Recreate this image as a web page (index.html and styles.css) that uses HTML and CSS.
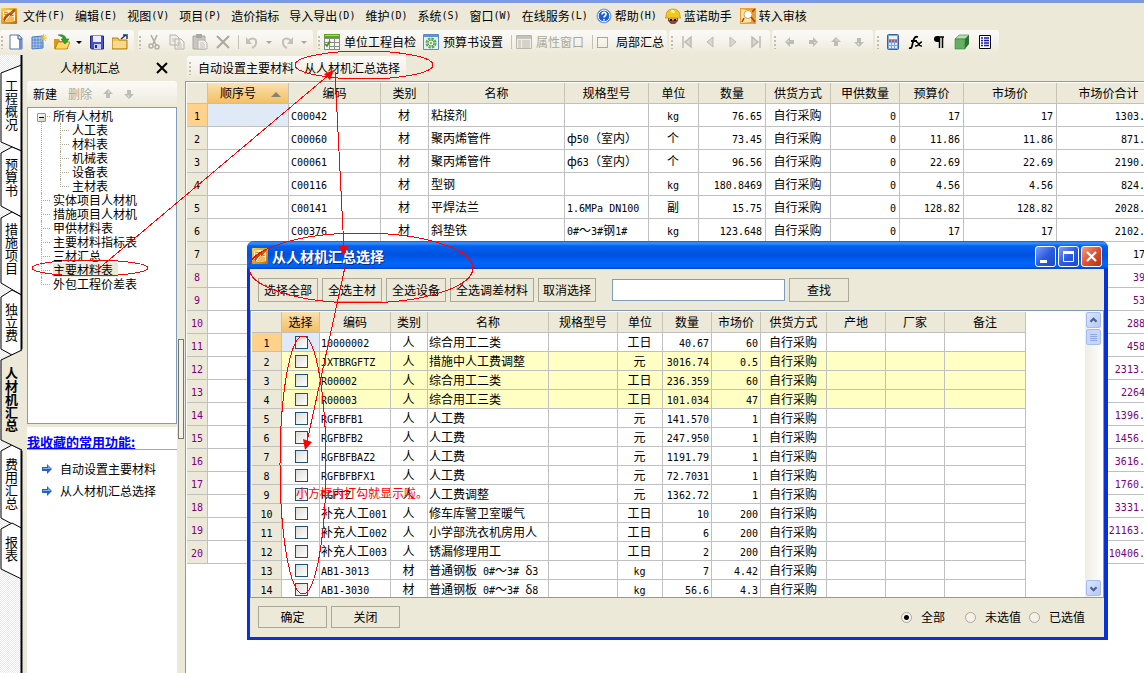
FILE: index.html
```html
<!DOCTYPE html>
<html lang="zh-CN">
<head>
<meta charset="utf-8">
<meta name="viewport" content="width=device-width, initial-scale=1">
<title>人材机汇总</title>
<link rel="stylesheet" href="styles.css">
</head>
<body>
<svg class="defs" aria-hidden="true">
  <defs>
    <linearGradient id="gold" x1="0" y1="0" x2="1" y2="1"><stop offset="0" stop-color="#ffd24a"/><stop offset="1" stop-color="#c56a00"/></linearGradient>
    <symbol id="app" viewBox="0 0 16 16">
      <rect width="16" height="16" rx="1" fill="url(#gold)"/><path d="M2 3l6-1 6 1v10l-6 1-6-1z" fill="#fff3cf"/><path d="M2 12c1-4 3-6 6-7l5-4 2 1-5 6-4 2-2 4z" fill="#b4500c"/><path d="M3 4l4 1M3 6l3 1M9 5l4-1M10 8l3-1" stroke="#c87820" stroke-width="1" fill="none"/><path d="M6 10l3-2 4 1v4l-5 1-3-1z" fill="#f4b850"/><path d="M4 13l5-6" stroke="#fff" stroke-width="1"/>
    </symbol>
    <symbol id="up" viewBox="0 0 10 10"><path d="M5 0l5 5H7v4H3V5H0z" fill="#bdbdb7"/><path d="M5 1l2 3H5z" fill="#dcdcd8"/></symbol>
    <symbol id="go" viewBox="0 0 10 10"><path d="M0 3h5V0l5 5-5 5V7H0z" fill="#2b5fc0"/><path d="M1 4h5V2l3 3H1z" fill="#78b0f5"/></symbol>
  </defs>
</svg>

<div class="app">
  <header>
    <nav class="menu" aria-label="主菜单">
      <svg class="i16"><use href="#app"/></svg>
      <button>文件<span class="en">(F)</span></button><button>编辑<span class="en">(E)</span></button><button>视图<span class="en">(V)</span></button><button>项目<span class="en">(P)</span></button><button>造价指标</button><button>导入导出<span class="en">(D)</span></button><button>维护<span class="en">(D)</span></button><button>系统<span class="en">(S)</span></button><button>窗口<span class="en">(W)</span></button><button>在线服务<span class="en">(L)</span></button>
      <button class="pic"><svg class="i16" viewBox="0 0 16 16"><circle cx="8" cy="8" r="7" fill="#1d5fd0" stroke="#7aa4e6"/><circle cx="8" cy="8" r="5.8" fill="none" stroke="#fff"/><path d="M6 6.500c0-3 4.500-2.500 4 0C9.800 8 8 8 8 9.500M8 11v1.500" stroke="#fff" stroke-width="1.700" fill="none"/></svg>帮助<span class="en">(H)</span></button>
      <button class="pic"><svg class="i16" viewBox="0 0 16 16"><path d="M3 9h10v4l-3 3H6l-3-3z" fill="#8c4a2c"/><path d="M4 10h8v2H4z" fill="#e0a070"/><path d="M5 11h2v2H5zM9 11h2v2H9z" fill="#201008"/><path d="M1 9C1 3 4 1 8 1s7 2 7 8l1 1H0z" fill="#f2c81c" stroke="#a88408" stroke-width=".6"/><path d="M6 2c2-1 4 0 4 3H6z" fill="#fff080"/></svg>蓝诺助手</button>
      <button class="pic"><svg class="i16" viewBox="0 0 16 16"><rect width="16" height="16" fill="#f39a2c"/><path d="M1 1l11 2-1 11-10 1z" fill="#ffe7a8"/><circle cx="8" cy="6.500" r="4" fill="#fff" stroke="#d09a50"/><path d="M11 9l4 5M12 4l3-3M4 10l-2 4" stroke="#9a4b10" stroke-width="1.600"/></svg>转入审核</button>
    </nav>

    <div class="bar">
      <div class="group"><i class="grip"></i>
        <button class="ib" aria-label="新建"><svg class="i16" viewBox="0 0 16 16"><path d="M2 1h9l3 3v11H2z" fill="#fff" stroke="#5a78a8"/><path d="M11 1l3 3v11h-3z" fill="#6e90c8"/><path d="M10 1v4h4" fill="#e8f0ff" stroke="#3a5888"/></svg></button>
        <button class="ib" aria-label="新建表"><svg class="i16" viewBox="0 0 16 16"><path d="M1 3l11-1v12l-11 1z" fill="#a8c8f4" stroke="#4a78c0"/><path d="M4 3v11M7 3v11M10 3v11M1 6h11M1 9h11M1 12h11" stroke="#4a78c0" stroke-width=".7"/><path d="M12.500 0v8M8.500 4h8M10 1l5 6M15 1l-5 6" stroke="#f4c01a"/></svg></button>
        <button class="ib" aria-label="打开"><svg class="i16" viewBox="0 0 16 16"><path d="M0 5h5l1 2h8v8H0z" fill="#d89818"/><path d="M1 15l3-7h12l-3 7z" fill="#ffd968" stroke="#a87008" stroke-width=".7"/><path d="M4 1c5-1 8 1 8 4h3l-4 5-4-5h2c0-2-2-3-5-4z" fill="#2ea32a" stroke="#176e16" stroke-width=".5"/></svg></button>
        <button class="caret" aria-label="打开选项"></button>
        <button class="ib" aria-label="保存"><svg class="i16" viewBox="0 0 16 16"><path d="M1.500 2h13v13h-12l-1-1z" fill="#4a50c8" stroke="#202878"/><path d="M4 2h8v6H4z" fill="#eef"/><path d="M5 10h7v5H5z" fill="#c8d0ec"/><path d="M6 11h2v3H6z" fill="#202878"/></svg></button>
        <button class="ib" aria-label="另存"><svg class="i16" viewBox="0 0 16 16"><path d="M0 4h6l1 2h8v9H0z" fill="#f0c45c" stroke="#9a6a10" stroke-width=".8"/><path d="M1 7h13v7H1z" fill="#f8d98c"/><path d="M9 5l5-4M11 1h4v4" stroke="#203860" stroke-width="1.500" fill="none"/></svg></button>
      </div>
      <div class="group"><i class="grip"></i>
        <button class="ib" aria-label="剪切" disabled><svg class="i16" viewBox="0 0 16 16"><path d="M5 1l5 10M11 1L7 10" stroke="#b0aea6" stroke-width="1.600"/><circle cx="5" cy="12" r="2" fill="none" stroke="#b0aea6" stroke-width="1.500"/><circle cx="11" cy="13" r="2" fill="none" stroke="#b0aea6" stroke-width="1.500"/></svg></button>
        <button class="ib" aria-label="复制" disabled><svg class="i16" viewBox="0 0 16 16"><path d="M1 1h6l3 3v7H1zM6 5h6l3 3v7H6z" fill="#f0efe9" stroke="#b4b2aa"/><path d="M3 5h4M3 7h3M8 9h4M8 11h5M8 13h5" stroke="#c4c2ba"/></svg></button>
        <button class="ib" aria-label="粘贴" disabled><svg class="i16" viewBox="0 0 16 16"><path d="M1 2h12v13H1z" fill="#c8c6be" stroke="#aaa89f"/><path d="M4 0h6v4H4z" fill="#aaa89f"/><path d="M6 6h6l3 3v6H6z" fill="#f0efe9" stroke="#b4b2aa"/><path d="M8 9h4M8 11h5M8 13h5" stroke="#c4c2ba"/></svg></button>
        <button class="ib" aria-label="删除" disabled><svg class="i16" viewBox="0 0 16 16"><path d="M2 2l12 12M14 2L2 14" stroke="#aaa89f" stroke-width="2"/></svg></button>
        <i class="sep"></i>
        <button class="ib" aria-label="撤销" disabled><svg class="i16" viewBox="0 0 16 16"><path d="M4 7c3-4 9-3 8 2 0 2-2 4-4 5" fill="none" stroke="#c2c0b8" stroke-width="2"/><path d="M2 3v7h6z" fill="#c2c0b8"/></svg></button>
        <button class="caret off" aria-label="撤销选项" disabled></button>
        <button class="ib" aria-label="重做" disabled><svg class="i16" viewBox="0 0 16 16"><path d="M12 7c-3-4-9-3-8 2 0 2 2 4 4 5" fill="none" stroke="#c2c0b8" stroke-width="2"/><path d="M14 3v7H8z" fill="#c2c0b8"/></svg></button>
        <button class="caret off" aria-label="重做选项" disabled></button>
      </div>
      <div class="group"><i class="grip"></i>
        <button class="tb"><svg class="i16" viewBox="0 0 16 16"><path d="M0 0h16v16H0z" fill="#8a8a86"/><path d="M0 0h16v4H0z" fill="#5ca81c"/><path d="M1 1h14v1H1z" fill="#a8dc60"/><path d="M1 5h4v3H1zM6 5h4v3H6zM11 5h4v3h-4zM6 9h4v3H6zM11 9h4v3h-4zM6 13h4v2H6zM11 13h4v2h-4zM1 9h4v6H1z" fill="#f4f4f0"/><path d="M1 10l2 2 3-5" stroke="#3c9010" stroke-width="1.600" fill="none"/></svg>单位工程自检</button>
        <button class="tb"><svg class="i16" viewBox="0 0 16 16"><path d="M.5.500h15v15H.5z" fill="#e4f0fc" stroke="#5a8ac8"/><path d="M1 1h14v2H1z" fill="#5a94dc"/><circle cx="8" cy="9" r="4.500" fill="none" stroke="#58a848" stroke-width="2" stroke-dasharray="2.500 1"/><circle cx="8" cy="9" r="3" fill="#eaf8e4" stroke="#58a848"/><circle cx="8" cy="9" r="1" fill="#58a848"/></svg>预算书设置</button>
        <i class="sep"></i>
        <button class="tb" disabled><svg class="i16" viewBox="0 0 16 16"><path d="M.5 1.500h15v13H.5z" fill="#f0efe8" stroke="#b8b6ac"/><path d="M1 2h14v3H1z" fill="#c6c4ba"/><path d="M2 7h3M2 9h3M2 11h3M2 13h3M6 7h8M6 9h8M6 11h8M6 13h8" stroke="#b8b6ac"/></svg>属性窗口</button>
        <i class="sep"></i>
        <label class="part"><input type="checkbox">局部汇总</label>
      </div>
      <div class="group tight"><i class="grip"></i>
        <button class="ib" aria-label="第一条" disabled><svg class="i16" viewBox="0 0 16 16"><path d="M4 2v12M12 3L6 8l6 5z" fill="#d8d7d0" stroke="#bdbbb3" stroke-width="1.500"/></svg></button>
        <button class="ib" aria-label="上一条" disabled><svg class="i16" viewBox="0 0 16 16"><path d="M11 3L5 8l6 5z" fill="#d8d7d0" stroke="#bdbbb3"/></svg></button>
        <button class="ib" aria-label="下一条" disabled><svg class="i16" viewBox="0 0 16 16"><path d="M5 3l6 5-6 5z" fill="#d8d7d0" stroke="#bdbbb3"/></svg></button>
        <button class="ib" aria-label="最后一条" disabled><svg class="i16" viewBox="0 0 16 16"><path d="M12 2v12M4 3l6 5-6 5z" fill="#d8d7d0" stroke="#bdbbb3" stroke-width="1.500"/></svg></button>
      </div>
      <div class="group tight"><i class="grip"></i>
        <button class="ib" aria-label="左移" disabled><svg class="arrow left"><use href="#up"/></svg></button>
        <button class="ib" aria-label="右移" disabled><svg class="arrow right"><use href="#up"/></svg></button>
        <button class="ib" aria-label="上移" disabled><svg class="arrow"><use href="#up"/></svg></button>
        <button class="ib" aria-label="下移" disabled><svg class="arrow down"><use href="#up"/></svg></button>
      </div>
      <div class="group tight"><i class="grip"></i>
        <button class="ib" aria-label="计算器"><svg class="i16" viewBox="0 0 16 16"><rect x="2.500" y=".5" width="11" height="15" rx="1" fill="#7fa6dc" stroke="#3a5ea0"/><path d="M4 2h8v3H4z" fill="#e8f2fc"/><path d="M4 7h2M7 7h2M10 7h2" stroke="#d83820" stroke-width="1.500"/><path d="M4 10h2M7 10h2M10 10h2M4 13h2M7 13h2M10 13h2" stroke="#fff" stroke-width="1.500"/></svg></button>
        <button class="ib" aria-label="函数"><svg class="i16" viewBox="0 0 16 16"><path d="M1 14c3 1 3-2 4-6s2-6 5-5M3 7h6" fill="none" stroke="#000" stroke-width="1.800"/><path d="M8 8c3-1 2 5 6 4M14 8c-3 0-3 5-7 4" fill="none" stroke="#000" stroke-width="1.500"/></svg></button>
        <button class="ib" aria-label="段落标记"><svg class="i16" viewBox="0 0 16 16"><path d="M13 3H7M8.500 3v11M11.500 3v11" stroke="#000" stroke-width="1.500" fill="none"/><path d="M8 2H6a3 3 0 000 6h2z"/></svg></button>
        <button class="ib" aria-label="模型"><svg class="i16" viewBox="0 0 16 16"><path d="M1 5l4-4h10l-4 4z" fill="#b4e0b0" stroke="#3c7c3c" stroke-width=".6"/><path d="M11 5l4-4v9l-4 5z" fill="#2f7034"/><path d="M1 5h10v10H1z" fill="#62b060" stroke="#3c7c3c" stroke-width=".6"/></svg></button>
        <button class="ib" aria-label="列表"><svg class="i16" viewBox="0 0 16 16"><path d="M2.500 1.500h11v13h-11z" fill="#fff" stroke="#000"/><path d="M4 4h2M4 6.500h2M4 9h2M4 11.500h2M7 4h5M7 6.500h5M7 9h5M7 11.500h5" stroke="#1818a8" stroke-width="1.300"/></svg></button>
      </div>
    </div>
  </header>

  <div class="work">
    <nav class="tabs" aria-label="工程页签">
      <svg class="tabshape" width="23" height="618" viewBox="0 0 23 618">
        <g stroke="#000" fill="#fff">
          <path d="M1 18L21.500 10v86L1 87z"/>
          <path d="M1 98l11-6 9.500 4v66L1 151z"/>
          <path d="M1 163l11-6 9.500 5v78L1 228z"/>
          <path d="M1 242l11-7 9.500 5v56L12 300 1 294z"/>
          <path d="M1 396l11-6 9.500 5v79L1 463z"/>
          <path d="M1 474l11-6 9.500 5v51L1 514z"/>
        </g>
        <path d="M21.500 0v295M21.500 395v223" stroke="#000" stroke-width="2"/>
        <path d="M23 294L1 305v80l22 11z" fill="#ece9d8"/><path d="M22 295L1 305v80l21 10" fill="none" stroke="#000"/>
      </svg>
      <button class="t1">工程概况</button><button class="t2">预算书</button><button class="t3">措施项目</button><button class="t4">独立费</button><button class="t5" aria-current="page">人材机汇总</button><button class="t6">费用汇总</button><button class="t7">报表</button>
    </nav>

    <aside class="side">
      <div class="sidehead"><h2>人材机汇总</h2><button aria-label="关闭"><svg width="12" height="12" viewBox="0 0 12 12"><path d="M1 1l10 10M11 1L1 11" stroke="#000" stroke-width="2"/></svg></button></div>
      <div class="sidebar">
        <button>新建</button><button disabled>删除</button><button aria-label="上移" disabled><svg class="arrow"><use href="#up"/></svg></button><button aria-label="下移" disabled><svg class="arrow down"><use href="#up"/></svg></button>
      </div>
      <div class="treebox">
        <button class="fold" aria-label="折叠"></button>
        <ul class="tree">
          <li><span>所有人材机</span>
            <ul><li><span>人工表</span></li><li><span>材料表</span></li><li><span>机械表</span></li><li><span>设备表</span></li><li><span>主材表</span></li></ul>
          </li>
          <li><span>实体项目人材机</span></li><li><span>措施项目人材机</span></li><li><span>甲供材料表</span></li><li><span>主要材料指标表</span></li><li><span>三材汇总</span></li><li><span class="chosen">主要材料表</span></li><li><span>外包工程价差表</span></li>
        </ul>
      </div>
      <section class="fav">
        <h3>我收藏的常用功能:</h3>
        <button><svg class="arrow"><use href="#go"/></svg>自动设置主要材料</button>
        <button><svg class="arrow"><use href="#go"/></svg>从人材机汇总选择</button>
      </section>
    </aside>
    <div class="split"><i></i></div>

    <main>
      <div class="subbar"><div class="group"><i class="grip"></i><button>自动设置主要材料</button><button>从人材机汇总选择</button></div></div>
      <div class="frame">
        <table class="grid big" id="materials">
          <colgroup><col class="w21"><col class="w81"><col class="w92"><col class="w48"><col class="w136"><col class="w84"><col class="w50"><col class="w67"><col class="w65"><col class="w69"><col class="w64"><col class="w93"><col class="w104"></colgroup>
          <thead><tr><th></th><th class="hot sorted">顺序号<i class="sort"></i></th><th>编码</th><th>类别</th><th>名称</th><th>规格型号</th><th>单位</th><th>数量</th><th>供货方式</th><th>甲供数量</th><th>预算价</th><th>市场价</th><th>市场价合计</th></tr></thead>
          <tbody></tbody>
        </table>
      </div>
    </main>
  </div>
</div>

<section class="dialog" role="dialog" aria-labelledby="dlg">
  <div class="title">
    <svg class="i16"><use href="#app"/></svg><h1 id="dlg">从人材机汇总选择</h1>
    <button aria-label="最小化"><svg viewBox="0 0 19 19"><path d="M4 13h7v3H4z" fill="#fff"/></svg></button>
    <button aria-label="最大化"><svg viewBox="0 0 19 19"><path d="M4.500 5v9.500h10V5" fill="none" stroke="#fff"/><path d="M4 4h11v3H4z" fill="#fff"/></svg></button>
    <button class="close" aria-label="关闭"><svg viewBox="0 0 19 19"><path d="M5 5l9 9M14 5l-9 9" stroke="#fff" stroke-width="2.200"/></svg></button>
  </div>
  <div class="tools">
    <button class="cmd">选择全部</button><button class="cmd">全选主材</button><button class="cmd">全选设备</button><button class="cmd long">全选调差材料</button><button class="cmd mid">取消选择</button>
    <input type="text" aria-label="查找内容"><button class="cmd">查找</button>
  </div>
  <div class="pane">
    <div class="scroll">
      <table class="grid small" id="choices">
        <colgroup><col class="w30"><col class="w38"><col class="w71"><col class="w37"><col class="w121"><col class="w69"><col class="w45"><col class="w49"><col class="w49"><col class="w66"><col class="w59"><col class="w59"><col class="w81"></colgroup>
        <thead><tr><th></th><th class="hot">选择</th><th>编码</th><th>类别</th><th>名称</th><th>规格型号</th><th>单位</th><th>数量</th><th>市场价</th><th>供货方式</th><th>产地</th><th>厂家</th><th>备注</th></tr></thead>
        <tbody></tbody>
      </table>
    </div>
    <div class="vbar">
      <button aria-label="向上滚动"><svg viewBox="0 0 15 15"><path d="M4 9l3.500-3.500L11 9" fill="none" stroke="#4d6185" stroke-width="2.500"/></svg></button>
      <div class="thumb"></div>
      <button class="end" aria-label="向下滚动"><svg viewBox="0 0 15 15"><path d="M4 6l3.500 3.500L11 6" fill="none" stroke="#4d6185" stroke-width="2.500"/></svg></button>
    </div>
  </div>
  <div class="foot">
    <button class="cmd ok">确定</button><button class="cmd ok">关闭</button>
    <div class="radios">
      <label><input type="radio" name="show" checked>全部</label><label class="near"><input type="radio" name="show">未选值</label><label><input type="radio" name="show">已选值</label>
    </div>
  </div>
</section>

<svg class="marks" width="1144" height="673" viewBox="0 0 1144 673" aria-hidden="true">
  <g fill="none" stroke="red" shape-rendering="crispEdges">
    <ellipse cx="364" cy="65" rx="69" ry="14"/><ellipse cx="90" cy="268" rx="58" ry="8"/><ellipse cx="361" cy="268" rx="112" ry="35"/><ellipse cx="303" cy="465" rx="23" ry="129"/>
    <path d="M97 270L330 74M335 72L344 250M345 267L307 442"/>
  </g>
  <path d="M334 70l-10 4 6 6zM344 256l-5-10h9zM305 450l-2-11 9 3z" fill="red"/>
</svg>
<p class="remark">小方框内打勾就显示啦。</p>
<script src="tables.js"></script>
</body>
</html>
```

FILE: styles.css
```css
* { box-sizing: border-box; }
body { margin: 0; background: #ece9d8; color: #000; overflow: hidden; font: 12px/14px "Noto Sans CJK SC", sans-serif; }
button { border: 0; padding: 0; margin: 0; background: none; color: inherit; font: inherit; white-space: nowrap; }
button:disabled { color: #aca899; }
h1, h2, h3, p, ul { margin: 0; padding: 0; font-weight: normal; font-size: 12px; }
svg { display: block; flex: none; }
.defs { position: absolute; width: 0; height: 0; }
.i16 { width: 16px; height: 16px; }
.en { font: 10px/12px "DejaVu Sans Mono", monospace; }
.arrow { width: 10px; height: 10px; }
.arrow.left { transform: rotate(-90deg); }
.arrow.right { transform: rotate(90deg); }
.arrow.down { transform: rotate(180deg); }

.app { display: flex; flex-direction: column; height: 100vh; border-top: 3px solid #7b9ae2; }
.menu { display: flex; align-items: center; gap: 10px; height: 26px; padding-left: 1px; margin-bottom: 1px; }
.menu > svg { margin-right: -4px; }
.menu button { display: flex; align-items: center; }
.menu button svg { margin-right: 3px; }
.menu .pic { margin-left: -2px; }

.bar { display: flex; gap: 4px; height: 25px; }
.group { display: flex; align-items: center; height: 24px; padding-right: 3px; border-radius: 3px; background: linear-gradient(#fbfaf7, #f3f1e7 60%, #ece9d8); }
.group.tight { margin-left: -2px; }
.grip { width: 4px; height: 14px; background: linear-gradient(#c1beb0, #c1beb0) 1px 1px / 2px 2px no-repeat, linear-gradient(#c1beb0, #c1beb0) 1px 5px / 2px 2px no-repeat, linear-gradient(#c1beb0, #c1beb0) 1px 9px / 2px 2px no-repeat, linear-gradient(#c1beb0, #c1beb0) 1px 13px / 2px 2px no-repeat; }
.tight .grip { margin: 0 1px; }
.ib { display: flex; justify-content: center; width: 23px; }
.caret { width: 12px; height: 12px; display: flex; align-items: center; justify-content: center; }
.caret::after { content: ""; border: 3px solid transparent; border-top-color: #000; border-bottom: 0; }
.caret.off::after { border-top-color: #aca899; }
.sep { width: 5px; height: 14px; border-right: 1px solid #c5c2b2; margin-right: 1px; }
.tb { display: flex; align-items: center; gap: 4px; padding: 0 4px 0 3px; }
.part { display: flex; align-items: center; gap: 8px; padding-left: 3px; }
.part input { appearance: none; width: 11px; height: 11px; margin: 0; border: 1px solid #aca899; }

.work { display: flex; flex: 1; min-height: 0; }
.tabs { position: relative; flex: none; width: 23px; overflow: hidden; display: flex; flex-direction: column; padding-top: 10px; background: conic-gradient(#fff 25%, #ece9d8 0 50%, #fff 0 75%, #ece9d8 0) 0 0 / 2px 2px; }
.tabshape { position: absolute; left: 0; top: 0; }
.tabs button { position: relative; width: 22px; writing-mode: vertical-rl; text-orientation: upright; font-size: 13px; line-height: 22px; padding-bottom: 2px; text-align: center; }
.t1 { height: 82px; }
.t2 { height: 62px; }
.t3 { height: 82px; }
.t4 { height: 64px; }
.t5 { height: 90px; }
.tabs .t5 { font-weight: bold; }
.t6 { height: 80px; }
.t7 { height: 50px; }

.side { flex: none; width: 154px; padding-left: 4px; display: flex; flex-direction: column; }
.sidehead { display: flex; align-items: center; justify-content: space-between; height: 26px; padding: 0 9px 0 33px; }
.sidebar { display: flex; align-items: center; gap: 11px; height: 26px; padding-left: 6px; border-radius: 3px; background: linear-gradient(#fbfaf7, #f3f1e7 60%, #ece9d8); }
.treebox { position: relative; height: 317px; border: 1px solid #7f9db9; background: #fff; padding: 1px 0 0 13px; }
.fold { position: absolute; left: 9px; top: 5px; width: 9px; height: 9px; z-index: 1; border: 1px solid #7a9ac0; border-radius: 1px; background: linear-gradient(#000, #000) center / 5px 1px no-repeat, linear-gradient(135deg, #fff, #d4cfbf); }
.tree, .tree ul { list-style: none; }
.tree li { position: relative; padding-left: 12px; line-height: 14px; }
.tree li::before { content: ""; position: absolute; left: 0; top: 7px; width: 9px; border-top: 1px dotted #aca899; }
.tree li::after { content: ""; position: absolute; left: 0; top: 0; bottom: 0; border-left: 1px dotted #aca899; }
.tree > li:first-child::after { top: 8px; }
.tree li:last-child::after { bottom: auto; height: 8px; }
.tree ul { padding-left: 7px; }
.tree span { display: inline-block; height: 14px; white-space: nowrap; }
.tree .chosen { background: #ece9d8; padding-right: 5px; }
.fav { flex: 1; margin-top: 3px; background: #fff; }
.fav h3 { height: 23px; padding-top: 8px; border-bottom: 1px solid #aca899; color: #00f; font-weight: bold; font-size: 13px; text-decoration: underline; white-space: nowrap; margin-bottom: 8px; }
.fav button { display: flex; align-items: center; gap: 8px; height: 22px; padding-left: 15px; }
.split { flex: none; width: 9px; display: flex; align-items: center; padding-left: 1px; }
.split i { width: 6px; height: 100px; margin-bottom: -50px; border: 1px solid #77766e; background: #f4f2e8; }
main { flex: 1; min-width: 0; display: flex; flex-direction: column; }
.subbar { height: 26px; padding: 1px 0 0 1px; display: flex; }
.subbar .group { gap: 10px; padding: 0 6px 0 1px; }
.subbar .grip { margin-right: -4px; }
.frame { flex: 1; min-height: 0; margin-left: -1px; overflow: hidden; border: solid #7f9db9; border-width: 1px 0 0 1px; padding: 1px 0 0 1px; background: #fff; }

.grid { table-layout: fixed; border-collapse: separate; border-spacing: 0; width: 0; white-space: nowrap; }
.grid th, .grid td { height: 23px; padding: 0 3px 0 2px; border: solid #c0c0c0; border-width: 0 1px 1px 0; overflow: hidden; font-weight: normal; line-height: 16px; text-align: left; }
.grid th { height: 21px; background: #ece9d8; text-align: center; border-right-color: #c6c3b6; padding: 0; }
.grid.big td { padding-bottom: 1px; }
.grid.small td { height: 19px; padding: 0 2px 1px 1px; }
.grid td.mid { text-align: center; }
.grid td.num { text-align: right; }
.grid td.idx { background: #ece9d8; text-align: center; padding-left: 0; padding-right: 0; }
.grid .hot { background: linear-gradient(#fbe0b0, #f2c062); }
.grid .sorted { padding-left: 5px; }
.grid tr:first-child td.idx { background: #ffd28c; }
.grid tr:first-child td.cur { background: #e0e9f6; }
.grid .plum { color: #800080; }
.grid .pale td { background: #ffffc4; }
.grid .pale td.idx { background: #ece9d8; }
.sort { display: inline-block; margin-left: 15px; vertical-align: 1px; border: 5px solid transparent; border-top: 0; border-bottom-color: #84827b; }
.w21 { width: 21px; } .w30 { width: 30px; } .w37 { width: 37px; } .w38 { width: 38px; }
.w45 { width: 45px; } .w48 { width: 48px; } .w49 { width: 49px; } .w50 { width: 50px; }
.w59 { width: 59px; } .w64 { width: 64px; } .w65 { width: 65px; } .w66 { width: 66px; }
.w67 { width: 67px; } .w69 { width: 69px; } .w71 { width: 71px; } .w81 { width: 81px; }
.w84 { width: 84px; } .w92 { width: 92px; } .w93 { width: 93px; } .w104 { width: 104px; }
.w121 { width: 121px; } .w136 { width: 136px; }
.grid input { appearance: none; display: block; width: 13px; height: 13px; margin: 0 auto; border: 1px solid #1c5180; background: linear-gradient(135deg, #dcdcd7, #fff); }
.grid.small td.cur { padding: 1px 0 0 1px; }

.dialog { position: absolute; left: 247px; top: 241px; width: 861px; height: 399px; display: flex; flex-direction: column; background: #ece9d8; border: solid #0831d9; border-width: 0 4px 3px 3px; border-radius: 7px 7px 0 0; }
.title { display: flex; align-items: center; gap: 2px; height: 28px; margin: 0 -4px 0 -3px; padding: 2px 6px 0 5px; border-radius: 7px 7px 0 0; background: linear-gradient(#0a5be4, #3a94ff 7%, #0560ee 18%, #0052e0 50%, #0066fb 80%, #0060f0 92%, #0040c8); }
.title h1 { flex: 1; padding-left: 2px; color: #fff; font-size: 14px; line-height: 18px; font-weight: bold; text-shadow: 1px 1px #0a2a80; }
.title button { width: 21px; height: 21px; border: 1px solid #fff; border-radius: 3px; background: linear-gradient(135deg, #7d9ff4, #2a5ce6 50%, #1b48c8); }
.title .close { background: linear-gradient(135deg, #f0a088, #e25030 50%, #b83010); }
.tools { display: flex; gap: 4px; padding: 9px 8px 8px; }
.cmd { width: 60px; height: 24px; border: 1px solid #aca899; background: #ece9d8; }
.cmd.long { width: 84px; }
.cmd.mid { width: 58px; }
.tools input { width: 173px; height: 22px; margin: 1px 0 0 12px; padding: 2px; border: 1px solid #7f9db9; background: #fff; font: inherit; }
.pane { flex: 1; min-height: 0; display: flex; border: 1px solid #7f9db9; background: #fff; padding: 1px 1px 0; }
.scroll { flex: 1; min-width: 0; overflow: hidden; }
.vbar { width: 17px; display: flex; flex-direction: column; gap: 1px; padding: 0 1px 1px; background: linear-gradient(90deg, #eeede5, #fefefb); }
.vbar button, .thumb { width: 15px; height: 16px; border: 1px solid #a5bdf2; border-radius: 2px; background: linear-gradient(135deg, #dce6fe, #b4c8f6); }
.vbar .thumb { background: repeating-linear-gradient(#8ea8e8 0 1px, transparent 1px 2px) center / 7px 7px no-repeat, #c6d6fc; }
.vbar .end { margin-top: auto; }
.foot { display: flex; align-items: center; gap: 4px; height: 39px; padding: 0 19px 1px 8px; }
.cmd.ok { width: 69px; height: 22px; }
.radios { display: flex; gap: 20px; margin-left: auto; }
.radios label { display: flex; align-items: center; gap: 9px; }
.radios .near { margin-right: -12px; }
.radios input { appearance: none; width: 11px; height: 11px; margin: 0; border: 1px solid #aca899; border-radius: 50%; background: #f4f2ea; }
.radios input:checked { background: radial-gradient(circle, #000 2px, #f4f2ea 3px); }

.marks { position: absolute; left: 0; top: 0; pointer-events: none; }
.remark { position: absolute; left: 296px; top: 486px; color: red; }
```

FILE: tables.js
```javascript
const materials = [
  ["C00042", "材", "粘接剂", "", "kg", "76.65", "17", "1303.05"],
  ["C00060", "材", "聚丙烯管件", "ф50（室内）", "个", "73.45", "11.86", "871.12"],
  ["C00061", "材", "聚丙烯管件", "ф63（室内）", "个", "96.56", "22.69", "2190.95"],
  ["C00116", "材", "型钢", "", "kg", "180.8469", "4.56", "824.66"],
  ["C00141", "材", "平焊法兰", "1.6MPa DN100", "副", "15.75", "128.82", "2028.92"],
  ["C00376", "材", "斜垫铁", "0#～3#钢1#", "kg", "123.648", "17", "2102.02"]
];
const totals = ["17.0", "39.0", "53.0", "288.0", "458.0", "2313.00", "2264.0", "1396.00", "1456.00", "3616.00", "1760.00", "3331.00", "21163.00", "10406.00"];
const choices = [
  ["10000002", "人", "综合用工二类", "工日", "40.67", "60"],
  ["JXTBRGFTZ", "人", "措施中人工费调整", "元", "3016.74", "0.5"],
  ["R00002", "人", "综合用工二类", "工日", "236.359", "60"],
  ["R00003", "人", "综合用工三类", "工日", "101.034", "47"],
  ["RGFBFB1", "人", "人工费", "元", "141.570", "1"],
  ["RGFBFB2", "人", "人工费", "元", "247.950", "1"],
  ["RGFBFBAZ2", "人", "人工费", "元", "1191.79", "1"],
  ["RGFBFBFX1", "人", "人工费", "元", "72.7031", "1"],
  ["RGFTZ", "人", "人工费调整", "元", "1362.72", "1"],
  ["补充人工001", "人", "修车库警卫室暖气", "工日", "10", "200"],
  ["补充人工002", "人", "小学部洗衣机房用人", "工日", "6", "200"],
  ["补充人工003", "人", "锈漏修理用工", "工日", "2", "200"],
  ["AB1-3013", "材", "普通钢板 0#～3# δ3", "kg", "7", "4.42"],
  ["AB1-3030", "材", "普通钢板 0#～3# δ8", "kg", "56.6", "4.3"]
];

const latin = text => String(text).replace(/[ -~]+/g, run => `<span class="en">${run}</span>`);
const cell = (text, kind = "") => `<td class="${kind}">${latin(text)}</td>`;

const bigRows = materials.map(([code, type, name, spec, unit, qty, price, total], i) =>
  "<tr>" + cell(i + 1, "idx") + cell("", "cur") + cell(code) + cell(type, "mid") + cell(name) + cell(spec) +
  cell(unit, "mid") + cell(qty, "num") + cell("自行采购", "mid") + cell("0", "num") +
  cell(price, "num") + cell(price, "num") + cell(total, "num") + "</tr>");
totals.forEach((total, i) => {
  const plum = i > 0 ? " plum" : "";
  bigRows.push("<tr>" + cell(i + 7, "idx" + plum) + cell("").repeat(11) + cell(total, "num" + plum) + "</tr>");
});
document.querySelector("#materials tbody").innerHTML = bigRows.join("");

document.querySelector("#choices tbody").innerHTML = choices.map(([code, type, name, unit, qty, price], i) =>
  `<tr class="${i > 0 && i < 4 ? "pale" : ""}">` + cell(i + 1, "idx") +
  `<td class="cur"><input type="checkbox" aria-label="选择 ${code}"></td>` +
  cell(code) + cell(type, "mid") + cell(name) + cell("") + cell(unit, "mid") + cell(qty, "num") +
  cell(price, "num") + cell("自行采购", "mid") + cell("").repeat(3) + "</tr>").join("");
```
